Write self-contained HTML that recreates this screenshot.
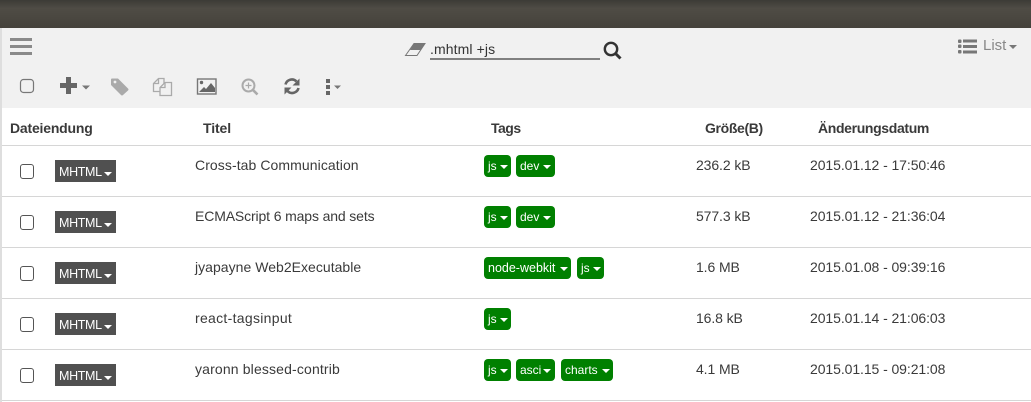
<!DOCTYPE html>
<html><head><meta charset="utf-8">
<style>
html,body{margin:0;padding:0;background:#fff;width:1031px;height:402px;overflow:hidden;font-family:"Liberation Sans",sans-serif;color:#333}
.a{position:absolute;white-space:nowrap}
.line{position:absolute;left:2px;right:0;height:1px;background:#d6d6d6}
.cb{position:absolute;left:20px;width:12px;height:13px;border:1px solid #555;border-radius:3px;background:#fff}
.ty{position:absolute;left:55px;width:61px;height:22px;background:#505050;color:#fff;font-size:12.5px;line-height:25px;letter-spacing:-.35px}
.ty span{position:absolute;left:4px;top:0}
.car{position:absolute;width:0;height:0;border-left:4px solid transparent;border-right:4px solid transparent;border-top:4px solid currentColor}
.tag{position:absolute;height:22px;background:#008000;border-radius:4px;color:#fff;font-size:12px;line-height:23px}
.tag span{position:absolute;left:4px;top:0;white-space:nowrap}
.tag .car{top:10px}
.t{font-size:14px;line-height:16px;color:#3a3a3a}
.d{letter-spacing:-.08px}
.s{letter-spacing:-.1px}
.h{font-size:14px;line-height:16px;font-weight:bold;color:#3a3a3a;top:120px}
</style></head><body>
<div class="a" style="left:0;top:0;width:1031px;height:28px;background:linear-gradient(#3c3b36,#4f4c45 30%,#45423b)"></div>
<div class="a" style="left:0;top:28px;width:1031px;height:80px;background:#f1f1f1"></div>
<div class="a" style="left:0;top:28px;width:2px;height:374px;background:#dedede"></div>

<svg class="a" style="left:0;top:28px" width="1031" height="80" viewBox="0 28 1031 80">
<g fill="#8a8a8a">
<rect x="10" y="38" width="22" height="3"/><rect x="10" y="45" width="22" height="3"/><rect x="10" y="52" width="22" height="3"/>
</g>
<rect x="20.5" y="79.500" width="13" height="13" rx="3" fill="none" stroke="#777" stroke-width="1.2"/>
<path d="M60 83h6v-6h5v6h6v5h-6v6h-5v-6h-6z" fill="#666"/>
<path d="M82 85.500h8l-4 4z" fill="#777"/>
<path d="M112 78.500h6l10 10q1 1 0 2l-5 4.500q-1 1-2 0l-10-10v-5.500q0-1 1-1z" fill="#aaa"/><circle cx="115" cy="82" r="1.400" fill="#f1f1f1"/>
<g fill="none" stroke="#aaa" stroke-width="1.300"><path d="M160 91.500h-6.500v-8l5-5h5.500v5"/><path d="M158.500 78.500v5h-5"/><path d="M165 82.500h6.500v13h-11.500v-8z" fill="#f1f1f1"/><path d="M165 82.500v5h-5"/></g>
<rect x="197.500" y="79" width="18.500" height="15" fill="none" stroke="#777" stroke-width="1.400"/>
<path d="M199 92l5-5 2 2 5-6 4 5v4z" fill="#666"/><circle cx="201.500" cy="82.500" r="1.700" fill="#666"/>
<circle cx="248.500" cy="85.500" r="6" fill="none" stroke="#aaa" stroke-width="2"/><path d="M253 90l4.500 4.500" stroke="#aaa" stroke-width="2.600"/><path d="M245.500 85.500h6M248.500 82.500v6" stroke="#aaa" stroke-width="1.200"/>
<g fill="none" stroke="#666" stroke-width="2.600"><path d="M285.500 84.500a6.500 6.500 0 0 1 11-3"/><path d="M298.500 88a6.500 6.500 0 0 1-11 3"/></g>
<path d="M299.500 78.500v7h-7zM284.500 94.500v-7h7z" fill="#666"/>
<g fill="#666"><rect x="326" y="79" width="4" height="4"/><rect x="326" y="85" width="4" height="4"/><rect x="326" y="91" width="4" height="4"/></g>
<path d="M334 85.500h7l-3.500 3.500z" fill="#777"/>
<path d="M405.500 55.500L414 43.500H425L417 55.500Z" fill="#f1f1f1" stroke="#777" stroke-width="1"/>
<path d="M410 50L414 43.500H425L420.500 50Z" fill="#777"/>
<circle cx="611" cy="49" r="6.200" fill="none" stroke="#333" stroke-width="2.400"/><path d="M615.500 53.500l5 5" stroke="#333" stroke-width="3"/>
<g fill="#777"><rect x="958" y="39.500" width="3.500" height="3.500" rx="1"/><rect x="958" y="44.500" width="3.500" height="3.500" rx="1"/><rect x="958" y="50" width="3.500" height="3.500" rx="1"/><rect x="963" y="39.500" width="14" height="3"/><rect x="963" y="45" width="14" height="3"/><rect x="963" y="50.500" width="14" height="3"/></g>
<path d="M1009 45h8l-4 4z" fill="#777"/>
</svg>

<div class="a" style="left:430px;top:41px;font-size:14px;line-height:16px;color:#333;letter-spacing:.1px">.mhtml +js</div>
<div class="a" style="left:430px;top:58px;width:170px;height:2px;background:#808080"></div>
<div class="a" style="left:983px;top:38px;font-size:15px;line-height:16px;color:#888">List</div>

<div class="a h" style="left:10px;letter-spacing:-.2px">Dateiendung</div>
<div class="a h" style="left:203px;letter-spacing:-.1px">Titel</div>
<div class="a h" style="left:491px;letter-spacing:-.5px">Tags</div>
<div class="a h" style="left:705px;letter-spacing:-.35px">Größe(B)</div>
<div class="a h" style="left:818px;letter-spacing:-.35px">Änderungsdatum</div>

<div class="line" style="top:145px"></div>
<div class="line" style="top:196px"></div>
<div class="line" style="top:247px"></div>
<div class="line" style="top:298px"></div>
<div class="line" style="top:349px"></div>
<div class="line" style="top:400px"></div>

<!-- Row 1 -->
<div class="cb" style="top:164px"></div>
<div class="ty" style="top:160px"><span>MHTML</span><i class="car" style="left:49px;top:12px"></i></div>
<div class="a t" style="left:195px;top:157px;letter-spacing:.08px">Cross-tab Communication</div>
<div class="tag" style="left:484px;top:155px;width:27px"><span>js</span><i class="car" style="left:15.500px"></i></div>
<div class="tag" style="left:516px;top:155px;width:39px"><span>dev</span><i class="car" style="left:27px"></i></div>
<div class="a t s" style="left:696px;top:157px">236.2 kB</div>
<div class="a t d" style="left:810px;top:157px">2015.01.12 - 17:50:46</div>

<!-- Row 2 -->
<div class="cb" style="top:215px"></div>
<div class="ty" style="top:211px"><span>MHTML</span><i class="car" style="left:49px;top:12px"></i></div>
<div class="a t" style="left:195px;top:208px;letter-spacing:-.13px">ECMAScript 6 maps and sets</div>
<div class="tag" style="left:484px;top:206px;width:27px"><span>js</span><i class="car" style="left:15.500px"></i></div>
<div class="tag" style="left:516px;top:206px;width:39px"><span>dev</span><i class="car" style="left:27px"></i></div>
<div class="a t s" style="left:696px;top:208px">577.3 kB</div>
<div class="a t d" style="left:810px;top:208px">2015.01.12 - 21:36:04</div>

<!-- Row 3 -->
<div class="cb" style="top:266px"></div>
<div class="ty" style="top:262px"><span>MHTML</span><i class="car" style="left:49px;top:12px"></i></div>
<div class="a t" style="left:195px;top:259px;letter-spacing:.03px">jyapayne Web2Executable</div>
<div class="tag" style="left:484px;top:257px;width:87px"><span style="font-size:12.500px">node-webkit</span><i class="car" style="left:76px"></i></div>
<div class="tag" style="left:577px;top:257px;width:27px"><span>js</span><i class="car" style="left:15.500px"></i></div>
<div class="a t s" style="left:696px;top:259px">1.6 MB</div>
<div class="a t d" style="left:810px;top:259px">2015.01.08 - 09:39:16</div>

<!-- Row 4 -->
<div class="cb" style="top:317px"></div>
<div class="ty" style="top:313px"><span>MHTML</span><i class="car" style="left:49px;top:12px"></i></div>
<div class="a t" style="left:195px;top:310px;letter-spacing:.3px">react-tagsinput</div>
<div class="tag" style="left:484px;top:308px;width:27px"><span>js</span><i class="car" style="left:15.500px"></i></div>
<div class="a t s" style="left:696px;top:310px">16.8 kB</div>
<div class="a t d" style="left:810px;top:310px">2015.01.14 - 21:06:03</div>

<!-- Row 5 -->
<div class="cb" style="top:368px"></div>
<div class="ty" style="top:364px"><span>MHTML</span><i class="car" style="left:49px;top:12px"></i></div>
<div class="a t" style="left:195px;top:361px;letter-spacing:.15px">yaronn blessed-contrib</div>
<div class="tag" style="left:484px;top:359px;width:27px"><span>js</span><i class="car" style="left:15.500px"></i></div>
<div class="tag" style="left:516px;top:359px;width:39px"><span>asci</span><i class="car" style="left:27px"></i></div>
<div class="tag" style="left:561px;top:359px;width:52px"><span>charts</span><i class="car" style="left:40.500px"></i></div>
<div class="a t s" style="left:696px;top:361px">4.1 MB</div>
<div class="a t d" style="left:810px;top:361px">2015.01.15 - 09:21:08</div>
</body></html>
